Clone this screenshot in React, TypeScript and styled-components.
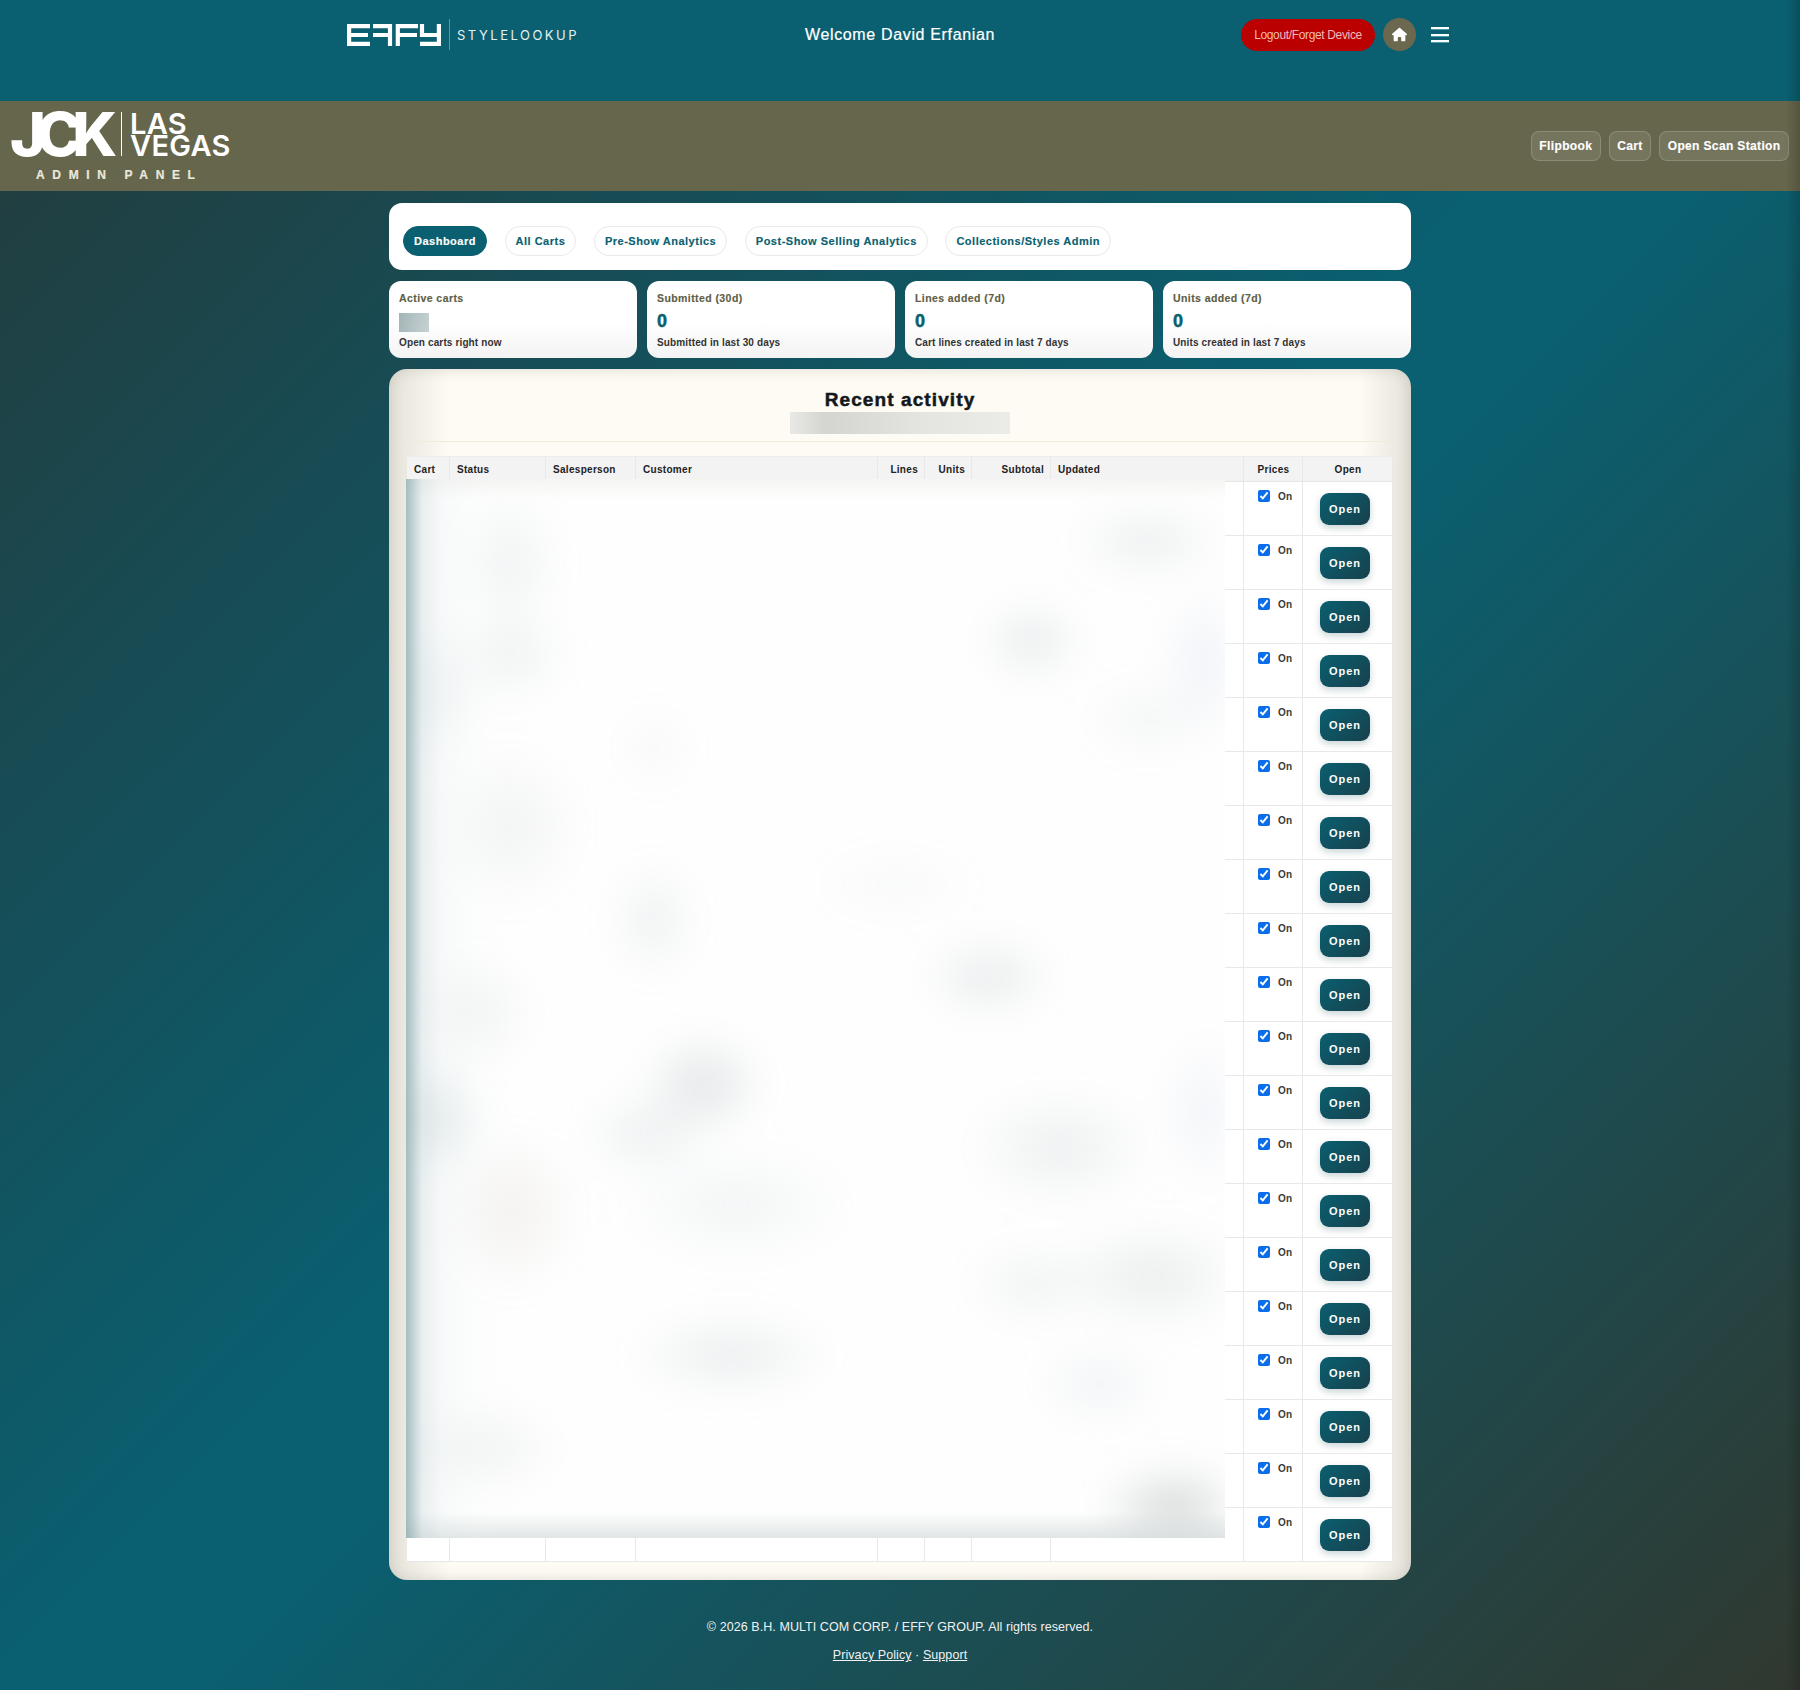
import React from "react";
import styled, { createGlobalStyle } from "styled-components";
import { FaHouse } from "react-icons/fa6";

const GlobalStyle = createGlobalStyle`
  html, body { margin: 0; padding: 0; }
  body { font-family: "Liberation Sans", Arial, sans-serif; }
`;

const Page = styled.div`
  position: relative;
  min-height: 1690px;
  overflow: hidden;
  background: linear-gradient(135deg, #243a3a 0%, #0a5f70 48%, #0a5f70 54%, #30382f 100%);
`;

const EdgeShade = styled.div`
  position: absolute;
  top: 0;
  right: 0;
  bottom: 0;
  width: 14px;
  pointer-events: none;
  background: linear-gradient(90deg, rgba(0, 0, 0, 0), rgba(0, 0, 0, 0.16));
`;

const TopBar = styled.header`
  height: 101px;
  background: #0a5f70;
  box-sizing: border-box;
  padding-top: 18px;
`;

const TopInner = styled.div`
  width: 1106px;
  margin: 0 auto;
  display: grid;
  grid-template-columns: 1fr auto 1fr;
  align-items: center;
  height: 33px;
`;

const Brand = styled.div`
  display: flex;
  align-items: center;
`;

const BrandRule = styled.span`
  width: 1px;
  height: 31px;
  margin: 0 7px 0 8px;
  background: rgba(255, 255, 255, 0.35);
`;

const BrandText = styled.span`
  font-family: "Inter", sans-serif;
  font-size: 13px;
  font-weight: 400;
  letter-spacing: 2.5px;
  color: #e6f0f2;
`;

const Welcome = styled.div`
  font-size: 16px;
  font-weight: 400;
  letter-spacing: 0.65px;
  color: #fff;
  -webkit-text-stroke: 0.2px #fff;
`;

const TopActions = styled.div`
  display: flex;
  justify-content: flex-end;
  align-items: center;
  padding-right: 4px;
`;

const LogoutButton = styled.button`
  height: 32px;
  width: 134px;
  border: none;
  border-radius: 16px;
  background: #bb0000;
  color: #f3b9b9;
  font: 12px "Liberation Sans", Arial, sans-serif;
  letter-spacing: -0.35px;
  padding: 0;
`;

const HomeButton = styled.button`
  width: 33px;
  height: 33px;
  margin-left: 8px;
  border: none;
  border-radius: 50%;
  background: #6b684f;
  color: #fff;
  display: flex;
  align-items: center;
  justify-content: center;
  padding: 0;
  font-size: 15px;
`;

const MenuButton = styled.button`
  width: 18px;
  height: 15px;
  margin-left: 15px;
  border: none;
  background: none;
  padding: 0;
  display: flex;
  flex-direction: column;
  justify-content: space-between;
`;

const MenuLine = styled.span`
  display: block;
  height: 2px;
  background: #fff;
  box-shadow: 0 1px 0 rgba(140, 220, 230, 0.5);
`;

const Band = styled.div`
  height: 90px;
  background: #66664c;
  display: flex;
  align-items: center;
  justify-content: space-between;
  padding: 0 11px;
`;

const ShowLogo = styled.div`
  display: flex;
  flex-direction: column;
  padding-top: 2px;
  color: #fff;
`;

const ShowRow = styled.div`
  display: flex;
  align-items: center;
  height: 44px;
`;

const ShowMark = styled.span`
  font-family: "Inter", sans-serif;
  font-size: 61px;
  font-weight: 800;
  letter-spacing: -9.5px;
  line-height: 44px;
  width: 110px;
  margin-left: -1px;
  margin-right: 1px;
`;

const ShowRule = styled.span`
  width: 1px;
  height: 44px;
  background: #fff;
  margin-right: 8px;
`;

const ShowPlace = styled.span`
  margin-top: 2px;
  font-family: "Inter", sans-serif;
  font-size: 29px;
  font-weight: 600;
  line-height: 22px;
  letter-spacing: 0.3px;
`;

const ShowCaption = styled.div`
  margin: 13px 0 0 25px;
  font-size: 12px;
  line-height: 13px;
  font-weight: 700;
  letter-spacing: 7.65px;
  color: #eae8dc;
  -webkit-text-stroke: 0.2px #eae8dc;
  white-space: nowrap;
`;

const BandActions = styled.div`
  display: flex;
  gap: 8px;
`;

const BandButton = styled.button`
  height: 30px;
  padding: 0 7.5px;
  border: 1px solid rgba(255, 255, 255, 0.16);
  border-radius: 8px;
  background: rgba(255, 255, 255, 0.1);
  color: #fff;
  font: 700 12px "Liberation Sans", Arial, sans-serif;
  letter-spacing: 0.36px;
  -webkit-text-stroke: 0.15px #fff;
`;

const Main = styled.main`
  width: 1022px;
  margin: 12px auto 0;
  display: flex;
  flex-direction: column;
  gap: 11px;
`;

const NavCard = styled.nav`
  height: 67px;
  box-sizing: border-box;
  padding: 23px 14px 0;
  background: #fff;
  border-radius: 13px;
  display: flex;
  gap: 17.6px;
  align-items: flex-start;
`;

const Pill = styled.button<{ $active?: boolean }>`
  height: 30px;
  padding: 0 10px;
  box-sizing: border-box;
  border-radius: 15px;
  border: 1px solid ${(p) => (p.$active ? "#0a5f70" : "#e9e9e9")};
  background: ${(p) => (p.$active ? "#0a5f70" : "#fff")};
  color: ${(p) => (p.$active ? "#fff" : "#0a5f70")};
  font: 700 11px "Liberation Sans", Arial, sans-serif;
  letter-spacing: 0.5px;
  white-space: nowrap;
  -webkit-text-stroke: 0.15px currentColor;
`;

const StatGrid = styled.section`
  display: grid;
  grid-template-columns: repeat(4, 1fr);
  gap: 10px;
`;

const StatCard = styled.div`
  height: 77px;
  box-sizing: border-box;
  padding: 10px 10px 0;
  border-radius: 12px;
  background: linear-gradient(180deg, #fff 55%, #f3f3f3 100%);
`;

const StatLabel = styled.div`
  font-size: 10.5px;
  line-height: 14px;
  font-weight: 700;
  letter-spacing: 0.42px;
  color: #5e5e46;
  -webkit-text-stroke: 0.15px #5e5e46;
`;

const StatValue = styled.div`
  margin-top: 5px;
  height: 22px;
  font-size: 18px;
  line-height: 22px;
  font-weight: 700;
  color: #0a5f70;
  -webkit-text-stroke: 0.5px #0a5f70;
`;

const StatMask = styled.div`
  width: 30px;
  height: 19px;
  margin-top: 8px;
  background: linear-gradient(100deg, #a3b5b8, #c6d2d2);
`;

const StatSub = styled.div`
  margin-top: 4px;
  font-size: 10px;
  line-height: 14px;
  font-weight: 700;
  letter-spacing: 0.13px;
  color: #333;
`;

const RecentCard = styled.section`
  height: 1211px;
  box-sizing: border-box;
  padding: 19px 18px 0;
  border-radius: 18px;
  background:
    linear-gradient(90deg, rgba(190, 188, 178, 0.4), rgba(190, 188, 178, 0) 60px),
    linear-gradient(270deg, rgba(190, 188, 178, 0.4), rgba(190, 188, 178, 0) 50px),
    #fdfbf3;
  box-shadow: inset 0 0 14px rgba(110, 105, 90, 0.22);
`;

const RecentTitle = styled.h2`
  margin: 0;
  text-align: center;
  font-size: 19px;
  line-height: 24px;
  font-weight: 700;
  letter-spacing: 1.1px;
  color: #12181b;
  -webkit-text-stroke: 0.5px #12181b;
`;

const TitleMask = styled.div`
  width: 220px;
  height: 22px;
  margin: 0 auto;
  background: linear-gradient(90deg, #e9e9e5, #d4d5d1 16%, #e4e4e0 60%, #ebebe7);
`;

const Divider = styled.div`
  height: 1px;
  margin-top: 7px;
  background: #f1ebd9;
`;

const TableWrap = styled.div`
  position: relative;
  margin-top: 14px;
`;

const Table = styled.table`
  width: 986px;
  table-layout: fixed;
  border-collapse: separate;
  border-spacing: 0;
  background: #fff;
`;

const Th = styled.th<{ $align?: string }>`
  height: 26px;
  box-sizing: border-box;
  padding: 0 6px 0 7px;
  background: #f3f3f3;
  border-top: 1px solid #ececec;
  border-right: 1px solid #e8e8e8;
  border-bottom: 1px solid #e6e6e6;
  text-align: ${(p) => p.$align || "left"};
  font-size: 10px;
  font-weight: 700;
  letter-spacing: 0.3px;
  color: #222;
`;

const Td = styled.td`
  height: 54px;
  box-sizing: border-box;
  padding: 0;
  border-right: 1px solid #e8e8e8;
  border-bottom: 1px solid #e8e8e8;
  vertical-align: top;
`;

const PriceToggle = styled.label`
  display: flex;
  align-items: center;
  gap: 8px;
  margin: 8px 0 0 14px;
  font-size: 10px;
  font-weight: 700;
  letter-spacing: 0.3px;
  color: #3a3a3a;
`;

const PriceCheck = styled.input`
  width: 12px;
  height: 12px;
  margin: 0;
  accent-color: #0a6eea;
`;

const OpenButton = styled.button`
  display: block;
  width: 50px;
  height: 32px;
  margin: 11px 0 0 17px;
  border: none;
  border-radius: 9px;
  background: linear-gradient(135deg, #0a5f70, #17414d);
  box-shadow: 0 3px 7px rgba(10, 60, 70, 0.22);
  color: #fff;
  font: 700 11px "Liberation Sans", Arial, sans-serif;
  letter-spacing: 1px;
  padding: 0;
`;

const blobs: [number, number, number, number, string][] = [
  [742, 62, 78, 40, "rgba(150,165,170,.17)"],
  [626, 162, 54, 44, "rgba(150,165,170,.2)"],
  [105, 84, 52, 80, "rgba(150,170,175,.13)"],
  [105, 176, 60, 50, "rgba(150,170,175,.14)"],
  [248, 269, 42, 42, "rgba(160,170,170,.07)"],
  [248, 441, 46, 60, "rgba(150,165,170,.15)"],
  [105, 348, 72, 84, "rgba(160,170,170,.13)"],
  [489, 405, 84, 34, "rgba(160,170,170,.07)"],
  [583, 498, 70, 44, "rgba(150,165,170,.2)"],
  [297, 605, 66, 54, "rgba(140,155,160,.24)"],
  [242, 655, 70, 46, "rgba(150,170,175,.16)"],
  [654, 669, 96, 60, "rgba(150,165,170,.16)"],
  [72, 533, 60, 60, "rgba(160,170,170,.13)"],
  [105, 733, 72, 84, "rgba(175,165,150,.14)"],
  [330, 726, 120, 60, "rgba(160,180,185,.12)"],
  [747, 798, 104, 56, "rgba(150,165,165,.18)"],
  [626, 805, 68, 44, "rgba(150,165,165,.13)"],
  [325, 876, 104, 44, "rgba(150,165,170,.18)"],
  [692, 905, 68, 44, "rgba(160,175,190,.13)"],
  [78, 969, 80, 46, "rgba(160,170,170,.14)"],
  [769, 1030, 80, 48, "rgba(140,150,150,.34)"],
  [805, 633, 54, 80, "rgba(170,185,215,.15)"],
  [805, 183, 54, 80, "rgba(170,185,215,.18)"],
  [742, 240, 66, 40, "rgba(150,165,170,.1)"],
  [30, 640, 50, 60, "rgba(130,160,165,.22)"],
  [30, 210, 46, 70, "rgba(150,170,175,.12)"],
];

const blobLayers = blobs
  .map(([x, y, rx, ry, c]) => `radial-gradient(${rx}px ${ry}px at ${x}px ${y}px, ${c}, rgba(255,255,255,0))`)
  .join(",");

const PrivacyMask = styled.div`
  position: absolute;
  left: -1px;
  top: 23px;
  width: 819px;
  height: 1059px;
  overflow: hidden;
  background: #fefefe;
  &::after {
    content: "";
    position: absolute;
    inset: 0;
    background:
      linear-gradient(90deg, rgba(125, 160, 165, 0.68), rgba(190, 208, 210, 0.34) 16px, rgba(220, 230, 232, 0.18) 36px, rgba(240, 244, 244, 0.1) 70px, rgba(255, 255, 255, 0) 110px),
      linear-gradient(0deg, rgba(185, 195, 195, 0.42), rgba(255, 255, 255, 0) 26px),
      linear-gradient(180deg, rgba(235, 235, 230, 0.5), rgba(255, 255, 255, 0) 20px);
  }
`;

const MaskBlobs = styled.div`
  position: absolute;
  inset: 0;
  background: ${blobLayers};
  filter: blur(16px);
`;

const Footer = styled.footer`
  padding-top: 39px;
  text-align: center;
  color: #f2f2f2;
  font-size: 12.5px;
  line-height: 17px;
  letter-spacing: 0.07px;
`;

const FooterLinks = styled.div`
  margin-top: 11px;
`;

const FooterLink = styled.a`
  color: #f2f2f2;
  text-decoration: underline;
`;

const cols = [43, 96, 90, 242, 47, 47, 79, 193, 59, 90];
const heads: [string, string?][] = [
  ["Cart"], ["Status"], ["Salesperson"], ["Customer"],
  ["Lines", "right"], ["Units", "right"], ["Subtotal", "right"], ["Updated"],
  ["Prices", "center"], ["Open", "center"],
];
const pills = ["All Carts", "Pre-Show Analytics", "Post-Show Selling Analytics", "Collections/Styles Admin"];
const stats = [
  { label: "Submitted (30d)", sub: "Submitted in last 30 days" },
  { label: "Lines added (7d)", sub: "Cart lines created in last 7 days" },
  { label: "Units added (7d)", sub: "Units created in last 7 days" },
];

function EffyLogo() {
  return (
    <svg width="94" height="22" viewBox="0 0 94 22" fill="none" stroke="#fff" strokeWidth="4.2" aria-label="Effy">
      <path d="M23 2.1H2.1V19.9H23M2.1 11H21" />
      <path d="M26 2.1H43V22M26 11H41" />
      <path d="M50.8 22V2.1H71M50.8 11H70" />
      <path d="M75 0V11H91.9M91.9 0V19.9H73" />
    </svg>
  );
}

export default function App() {
  return (
    <Page>
      <GlobalStyle />
      <TopBar>
        <TopInner>
          <Brand>
            <EffyLogo />
            <BrandRule />
            <BrandText>STYLELOOKUP</BrandText>
          </Brand>
          <Welcome>Welcome David Erfanian</Welcome>
          <TopActions>
            <LogoutButton>Logout/Forget Device</LogoutButton>
            <HomeButton aria-label="Home"><FaHouse /></HomeButton>
            <MenuButton aria-label="Menu">
              <MenuLine />
              <MenuLine />
              <MenuLine />
            </MenuButton>
          </TopActions>
        </TopInner>
      </TopBar>

      <Band>
        <ShowLogo>
          <ShowRow>
            <ShowMark>JCK</ShowMark>
            <ShowRule />
            <ShowPlace>LAS<br />VEGAS</ShowPlace>
          </ShowRow>
          <ShowCaption>ADMIN PANEL</ShowCaption>
        </ShowLogo>
        <BandActions>
          <BandButton>Flipbook</BandButton>
          <BandButton>Cart</BandButton>
          <BandButton>Open Scan Station</BandButton>
        </BandActions>
      </Band>

      <Main>
        <NavCard>
          <Pill $active>Dashboard</Pill>
          {pills.map((p) => <Pill key={p}>{p}</Pill>)}
        </NavCard>

        <StatGrid>
          <StatCard>
            <StatLabel>Active carts</StatLabel>
            <StatMask />
            <StatSub>Open carts right now</StatSub>
          </StatCard>
          {stats.map((s) => (
            <StatCard key={s.label}>
              <StatLabel>{s.label}</StatLabel>
              <StatValue>0</StatValue>
              <StatSub>{s.sub}</StatSub>
            </StatCard>
          ))}
        </StatGrid>

        <RecentCard>
          <RecentTitle>Recent activity</RecentTitle>
          <TitleMask />
          <Divider />
          <TableWrap>
            <Table>
              <colgroup>
                {cols.map((w, i) => <col key={i} width={w} />)}
              </colgroup>
              <thead>
                <tr>
                  {heads.map(([h, a]) => <Th key={h} $align={a}>{h}</Th>)}
                </tr>
              </thead>
              <tbody>
                {Array.from({ length: 20 }, (_, r) => (
                  <tr key={r}>
                    {cols.slice(0, 8).map((_, c) => <Td key={c} />)}
                    <Td>
                      <PriceToggle>
                        <PriceCheck type="checkbox" defaultChecked />
                        On
                      </PriceToggle>
                    </Td>
                    <Td>
                      <OpenButton>Open</OpenButton>
                    </Td>
                  </tr>
                ))}
              </tbody>
            </Table>
            <PrivacyMask>
              <MaskBlobs />
            </PrivacyMask>
          </TableWrap>
        </RecentCard>
      </Main>

      <Footer>
        <div>© 2026 B.H. MULTI COM CORP. / EFFY GROUP. All rights reserved.</div>
        <FooterLinks>
          <FooterLink href="#">Privacy Policy</FooterLink> · <FooterLink href="#">Support</FooterLink>
        </FooterLinks>
      </Footer>
      <EdgeShade />
    </Page>
  );
}
